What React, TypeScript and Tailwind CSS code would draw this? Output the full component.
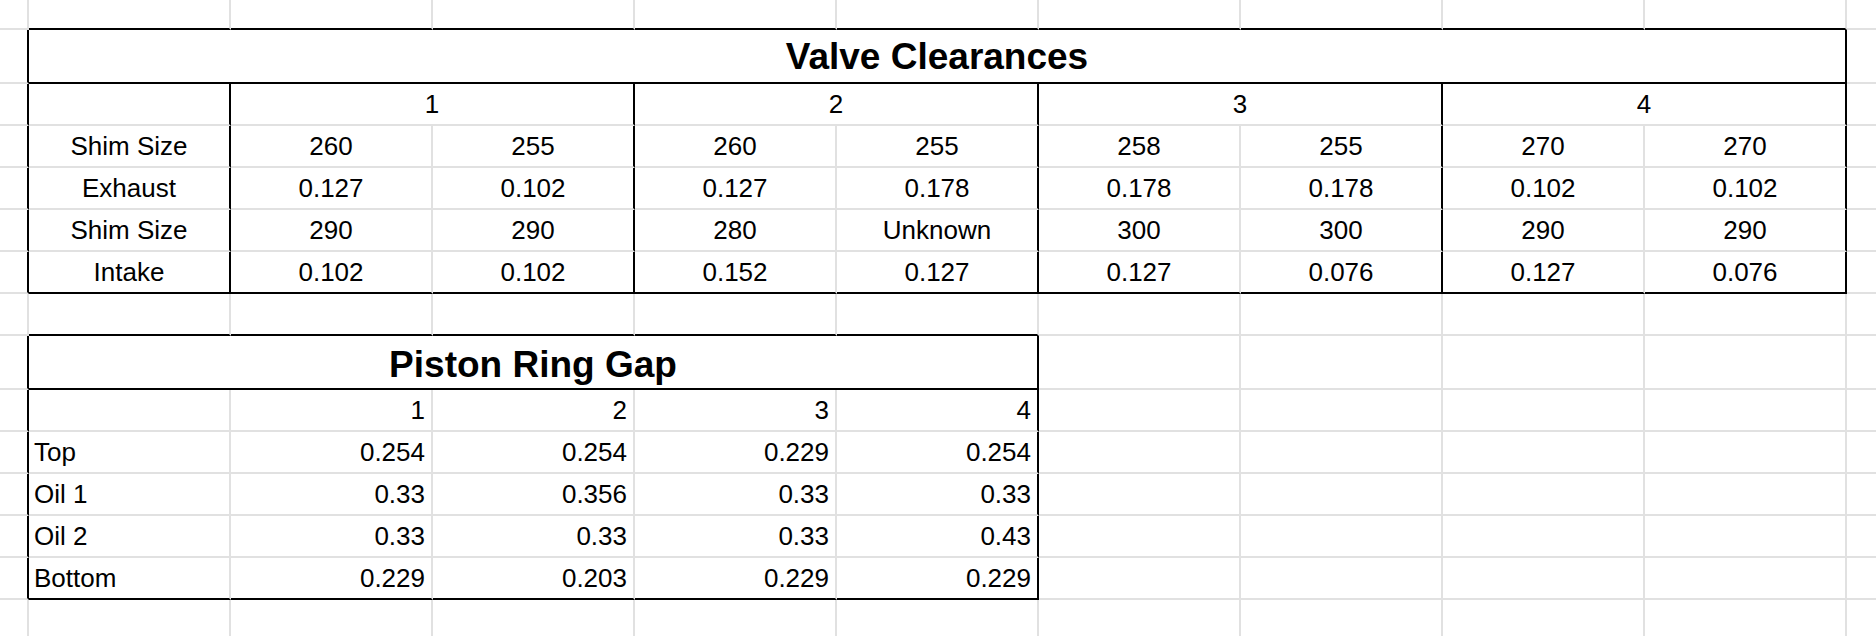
import React from "react";

type Kind = "empty" | "title" | "title2" | "center" | "right" | "left";
type Cell = { col: number; span: number; text: string; kind: Kind };

const valveData: string[][] = [
  ["Shim Size", "260", "255", "260", "255", "258", "255", "270", "270"],
  ["Exhaust", "0.127", "0.102", "0.127", "0.178", "0.178", "0.178", "0.102", "0.102"],
  ["Shim Size", "290", "290", "280", "Unknown", "300", "300", "290", "290"],
  ["Intake", "0.102", "0.102", "0.152", "0.127", "0.127", "0.076", "0.127", "0.076"],
];

const pistonData: string[][] = [
  ["", "1", "2", "3", "4"],
  ["Top", "0.254", "0.254", "0.229", "0.254"],
  ["Oil 1", "0.33", "0.356", "0.33", "0.33"],
  ["Oil 2", "0.33", "0.33", "0.33", "0.43"],
  ["Bottom", "0.229", "0.203", "0.229", "0.229"],
];

function emptyRange(from: number, to: number): Cell[] {
  const out: Cell[] = [];
  for (let c = from; c <= to; c++) out.push({ col: c, span: 1, text: "", kind: "empty" });
  return out;
}

function buildRow(r: number): Cell[] {
  if (r === 1) {
    return [
      { col: 0, span: 1, text: "", kind: "empty" },
      { col: 1, span: 9, text: "Valve Clearances", kind: "title" },
      { col: 10, span: 1, text: "", kind: "empty" },
    ];
  }
  if (r === 2) {
    return [
      { col: 0, span: 1, text: "", kind: "empty" },
      { col: 1, span: 1, text: "", kind: "center" },
      { col: 2, span: 2, text: "1", kind: "center" },
      { col: 4, span: 2, text: "2", kind: "center" },
      { col: 6, span: 2, text: "3", kind: "center" },
      { col: 8, span: 2, text: "4", kind: "center" },
      { col: 10, span: 1, text: "", kind: "empty" },
    ];
  }
  if (r >= 3 && r <= 6) {
    const d = valveData[r - 3];
    return [
      { col: 0, span: 1, text: "", kind: "empty" },
      ...d.map((t, i) => ({ col: i + 1, span: 1, text: t, kind: "center" as Kind })),
      { col: 10, span: 1, text: "", kind: "empty" },
    ];
  }
  if (r === 8) {
    return [
      { col: 0, span: 1, text: "", kind: "empty" },
      { col: 1, span: 5, text: "Piston Ring Gap", kind: "title2" },
      ...emptyRange(6, 10),
    ];
  }
  if (r >= 9 && r <= 13) {
    const d = pistonData[r - 9];
    return [
      { col: 0, span: 1, text: "", kind: "empty" },
      ...d.map((t, i) => ({ col: i + 1, span: 1, text: t, kind: (i === 0 ? "left" : "right") as Kind })),
      ...emptyRange(6, 10),
    ];
  }
  return emptyRange(0, 10);
}

function blackBottom(r: number, c: number): boolean {
  if ((r === 0 || r === 1 || r === 6) && c >= 1 && c <= 9) return true;
  if ((r === 7 || r === 8 || r === 13) && c >= 1 && c <= 5) return true;
  return false;
}

function blackRight(r: number, c: number, span: number): boolean {
  const end = c + span - 1;
  if (end === 0 && ((r >= 1 && r <= 6) || (r >= 8 && r <= 13))) return true;
  if (end === 9 && r >= 1 && r <= 6) return true;
  if (end === 5 && r >= 8 && r <= 13) return true;
  if ((end === 1 || end === 3 || end === 5 || end === 7) && r >= 2 && r <= 6) return true;
  return false;
}

const spanClass: Record<number, string> = {
  1: "",
  2: "col-span-2",
  5: "col-span-5",
  9: "col-span-9",
};

const kindClass: Record<Kind, string> = {
  empty: "",
  title: "items-end justify-center pb-[4px] text-[37px] leading-[42px] font-bold",
  title2: "items-end justify-center pb-[2px] text-[37px] leading-[42px] font-bold",
  center: "items-center justify-center text-[26px] leading-[30px]",
  right: "items-center justify-end pr-[6px] text-[26px] leading-[30px]",
  left: "items-center justify-start pl-[5px] text-[26px] leading-[30px]",
};

export default function App() {
  const rows: Cell[][] = [];
  for (let r = 0; r < 15; r++) rows.push(buildRow(r));

  return (
    <div className="w-[1876px] h-[636px] overflow-hidden bg-white font-['Liberation_Sans',Arial,sans-serif] text-black">
      <div className="grid grid-cols-[29px_repeat(10,202px)] grid-rows-[30px_54px_repeat(6,42px)_54px_repeat(6,42px)] w-max">
        {rows.map((row, r) =>
          row.map((cell) => {
            const rb = blackRight(r, cell.col, cell.span) ? "border-r-black" : "border-r-[#e1e1e1]";
            const bb = blackBottom(r, cell.col) ? "border-b-black" : "border-b-[#e1e1e1]";
            return (
              <div
                key={`${r}-${cell.col}`}
                className={`flex overflow-hidden whitespace-nowrap border-r-2 border-b-2 ${rb} ${bb} ${spanClass[cell.span]} ${kindClass[cell.kind]}`}
              >
                {cell.text}
              </div>
            );
          })
        )}
      </div>
    </div>
  );
}
